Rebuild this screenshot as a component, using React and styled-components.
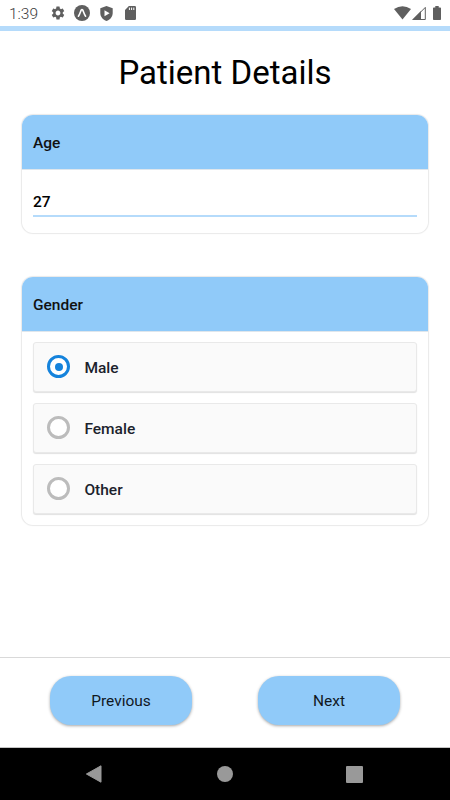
import { useState } from 'react';
import styled, { createGlobalStyle } from 'styled-components';
import { MdSettings } from 'react-icons/md';

//CSS Template

const GlobalStyle = createGlobalStyle`
    *{
        box-sizing: border-box;
    }

    body{
        margin: 0;
        background: #ffffff;
        font-family: Roboto, sans-serif;
        color: #000000;
    }
`

const Screen = styled.div`
    display: flex;
    flex-flow: column nowrap;
    width: 450px;
    height: 800px;
    overflow: hidden;
`

const StatusBar = styled.header`
    display: flex;
    align-items: center;
    justify-content: space-between;
    flex: 0 0 31px;
    padding: 0 9px 0 9px;
    border-bottom: 5px solid #b5dbfb;
    color: #5f5f5f;
`

const StatusGroup = styled.div`
    display: flex;
    align-items: center;

    svg{
        display: block;
    }
`

const StatusIcons = styled(StatusGroup)`
    gap: ${props => props.$gap};
    margin-left: ${props => props.$offset || '0'};
`

const Clock = styled.span`
    width: 33px;
    font-size: 15.5px;
    line-height: 24px;
    color: #3c3c3c;
    font-weight: 300;
    padding-top: 2px;
`

const BatterySlot = styled.span`
    margin-left: 6px;
`

const Content = styled.main`
    flex: 1 1 auto;
    padding: 0 22px;
`

const Title = styled.h1`
    margin: 22px 0 21.5px;
    font-size: 33px;
    line-height: 40px;
    font-weight: 400;
    text-align: center;
`

const Card = styled.section`
    margin-bottom: ${props => props.$spacing || '0'};
    border-radius: 11px;
    background: #ffffff;
    box-shadow: 0 0 1px 1px rgba(0, 0, 0, 0.09);
    overflow: hidden;
`

const CardHeader = styled.h2`
    display: flex;
    align-items: center;
    height: 55px;
    margin: 0;
    padding: 2px 11px 0;
    background: #90caf9;
    border-bottom: 1px solid #dfe6ec;
    font-size: 15.5px;
    font-weight: 500;
    color: #111111;
`

const AgeBody = styled.div`
    height: 63.5px;
    padding: 17px 11px;
`

const AgeInput = styled.input`
    display: block;
    width: 100%;
    height: 30px;
    padding: 2px 0 0;
    border: none;
    border-bottom: 2px solid #b5dbfb;
    outline: none;
    background: transparent;
    font-family: inherit;
    font-size: 15.5px;
    font-weight: 500;
    color: #000000;
`

const Options = styled.div`
    display: flex;
    flex-flow: column nowrap;
    gap: 11px;
    padding: 10px 11px 10.5px;
`

const Option = styled.label`
    display: flex;
    align-items: center;
    gap: 14px;
    height: 50.2px;
    padding: 0 0 0 13.4px;
    border: 1px solid #e9e9e9;
    border-radius: 3px;
    background: #fafafa;
    box-shadow: 0 1px 1px rgba(0, 0, 0, 0.12);
    font-size: 15.5px;
    font-weight: 500;
    color: #1b222c;

    input{
        display: none;
    }
`

const OptionText = styled.span`
    padding-top: 2px;
`

const Radio = styled.span`
    display: flex;
    align-items: center;
    justify-content: center;
    width: 23px;
    height: 23px;
    border: 3px solid ${props => props.$checked ? '#1583dc' : '#bcbcbc'};
    border-radius: 50%;
    background: #ffffff;

    &::after{
        content: '';
        width: 8px;
        height: 8px;
        border-radius: 50%;
        background: ${props => props.$checked ? '#1583dc' : 'transparent'};
    }
`

const Footer = styled.footer`
    display: flex;
    justify-content: space-between;
    flex: 0 0 91px;
    padding: 18px 50px 0;
    border-top: 1px solid #d9d9d9;
    border-bottom: 1px solid #c4c4c4;
`

const Button = styled.button`
    width: 142px;
    height: 49px;
    padding: 0;
    border: none;
    border-radius: 21px;
    background: #90caf9;
    box-shadow: 0 1px 3px rgba(0, 0, 0, 0.35);
    font-family: inherit;
    font-size: 15.5px;
    color: #10181f;
`

const NavBar = styled.nav`
    display: flex;
    align-items: center;
    justify-content: space-between;
    flex: 0 0 52px;
    padding: 0 87px 0 85px;
    background: #000000;

    svg{
        display: block;
    }
`

const genders = ['Male', 'Female', 'Other']

function AppIcon() {
    return (
        <svg width="16" height="16" viewBox="0 0 16 16">
            <circle cx="8" cy="8" r="8" fill="#5f5f5f" />
            <path d="M4.4 11.2C5.9 9.3 6.6 6.2 7.3 4.9Q8 4 8.7 4.9C9.4 6.2 10.1 9.3 11.6 11.2" fill="none" stroke="#ffffff" strokeWidth="1.6" strokeLinecap="round" />
        </svg>
    )
}

function ShieldIcon() {
    return (
        <svg width="13" height="15" viewBox="0 0 13 15">
            <path d="M6.5 0L12.7 2.3V7C12.7 10.7 10 13.8 6.5 15C3 13.8 .3 10.7 .3 7V2.3Z" fill="#5f5f5f" />
            <path d="M4.5 4.3L9.6 7.3L4.5 10.3Z" fill="#ffffff" />
        </svg>
    )
}

function SdCardIcon() {
    return (
        <svg width="11" height="14" viewBox="0 0 11 14">
            <path d="M3.9 0H9.8Q11 0 11 1.2V12.8Q11 14 9.8 14H1.2Q0 14 0 12.8V4Z" fill="#5f5f5f" />
            <path d="M4.4 1.6V4M6.6 1.6V4M8.8 1.6V4" stroke="#ffffff" strokeWidth="1" />
        </svg>
    )
}

function WifiIcon() {
    return (
        <svg width="17" height="14" viewBox="0 0 17 14">
            <path d="M8.5 13.5L0 3Q8.5 -2.6 17 3Z" fill="#5f5f5f" />
        </svg>
    )
}

function SignalIcon() {
    return (
        <svg width="14" height="14" viewBox="0 0 14 14">
            <path d="M0 14L9 5V14Z" fill="#5f5f5f" />
            <path d="M1.2 13.5L13.3 1.4V13.5Z" fill="none" stroke="#5f5f5f" strokeWidth="1" />
        </svg>
    )
}

function BatteryIcon() {
    return (
        <svg width="8" height="14" viewBox="0 0 8 14">
            <path d="M2.3 0H5.7V1.4H7.2Q8 1.4 8 2.2V13.2Q8 14 7.2 14H.8Q0 14 0 13.2V2.2Q0 1.4 .8 1.4H2.3Z" fill="#5f5f5f" />
        </svg>
    )
}

export default function App() {

    const [age, setAge] = useState('27')
    const [gender, setGender] = useState('Male')

    return (
        <>
            <GlobalStyle />
            <Screen>
                <StatusBar>
                    <StatusGroup>
                        <Clock>1:39</Clock>
                        <StatusIcons $gap="8px" $offset="8px">
                            <MdSettings size={16} />
                            <AppIcon />
                        </StatusIcons>
                        <StatusIcons $gap="12px" $offset="10px">
                            <ShieldIcon />
                            <SdCardIcon />
                        </StatusIcons>
                    </StatusGroup>
                    <StatusIcons $gap="1px">
                        <WifiIcon />
                        <SignalIcon />
                        <BatterySlot>
                            <BatteryIcon />
                        </BatterySlot>
                    </StatusIcons>
                </StatusBar>

                <Content>
                    <Title>Patient Details</Title>
                    <Card $spacing="43.5px">
                        <CardHeader>Age</CardHeader>
                        <AgeBody>
                            <AgeInput value={age} onChange={e => setAge(e.target.value)} />
                        </AgeBody>
                    </Card>
                    <Card>
                        <CardHeader>Gender</CardHeader>
                        <Options>
                            {genders.map(name => (
                                <Option key={name}>
                                    <input type="radio" name="gender" checked={gender === name} onChange={() => setGender(name)} />
                                    <Radio $checked={gender === name} />
                                    <OptionText>{name}</OptionText>
                                </Option>
                            ))}
                        </Options>
                    </Card>
                </Content>

                <Footer>
                    <Button>Previous</Button>
                    <Button>Next</Button>
                </Footer>
                <NavBar>
                    <svg width="17" height="18" viewBox="0 0 17 18">
                        <path d="M16 .8V17.2L1.4 9Z" fill="#999999" stroke="#999999" strokeWidth="1" strokeLinejoin="round" />
                    </svg>
                    <svg width="18" height="16" viewBox="0 0 18 16">
                        <circle cx="10" cy="8" r="8" fill="#999999" />
                    </svg>
                    <svg width="17" height="17" viewBox="0 0 17 17">
                        <rect width="17" height="17" rx="1" fill="#999999" />
                    </svg>
                </NavBar>
            </Screen>
        </>
    )
}
